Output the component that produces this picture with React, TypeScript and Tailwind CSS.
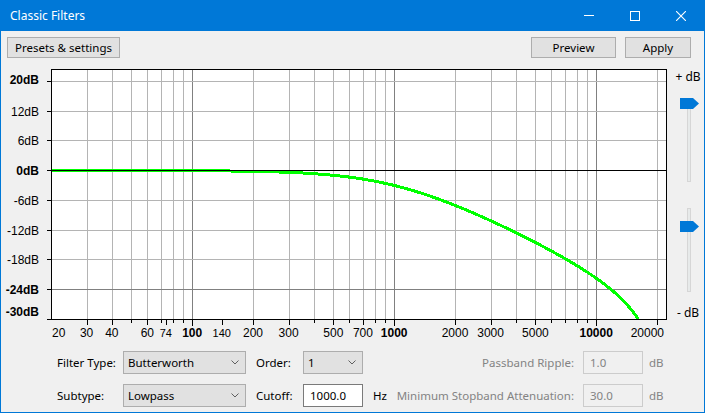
import React from 'react';

// filter response: 1st order butterworth lowpass, bilinear, 44.1k
const FS = 44100;
const FC = 1000;
const PX_PER_DECADE = 202;

const xOf = (f: number) => 51 + PX_PER_DECADE * Math.log10(f / 20);
const yOf = (db: number) => 170 - db * (149 / 30);
const col = (f: number) => Math.round(xOf(f)) + 0.5;

const gridFreqs: number[] = [];
for (const dec of [10, 100, 1000, 10000]) {
  for (let k = 1; k <= 9; k++) {
    const f = k * dec;
    if (f >= 30 && f <= 20000) gridFreqs.push(f);
  }
}
const decades = [100, 1000, 10000];

const hGrid = [
  { row: 81, color: '#b4b4b4' },
  { row: 111, color: '#b4b4b4' },
  { row: 140, color: '#b4b4b4' },
  { row: 200, color: '#b4b4b4' },
  { row: 230, color: '#b4b4b4' },
  { row: 259, color: '#b4b4b4' },
  { row: 289, color: '#808080' },
];

const dbLabels = [
  { text: '20dB', base: 83.5, tick: 81, bold: true },
  { text: '12dB', base: 116, tick: 111 },
  { text: '6dB', base: 144.5, tick: 140 },
  { text: '0dB', base: 174.5, tick: 170, bold: true },
  { text: '-6dB', base: 204.5, tick: 200 },
  { text: '-12dB', base: 234.5, tick: 230 },
  { text: '-18dB', base: 264, tick: 259 },
  { text: '-24dB', base: 294, tick: 289, bold: true },
  { text: '-30dB', base: 316, tick: 319, bold: true },
];

const hzLabels: { f: number; text: string; bold?: boolean; small?: boolean; anchor?: 'start' | 'end'; x?: number }[] = [
  { f: 20, text: '20', anchor: 'start', x: 52 },
  { f: 30, text: '30' },
  { f: 40, text: '40' },
  { f: 60, text: '60' },
  { f: 74, text: '74', small: true },
  { f: 100, text: '100', bold: true },
  { f: 140, text: '140', small: true },
  { f: 200, text: '200' },
  { f: 300, text: '300' },
  { f: 500, text: '500' },
  { f: 700, text: '700' },
  { f: 1000, text: '1000', bold: true },
  { f: 2000, text: '2000' },
  { f: 3000, text: '3000' },
  { f: 5000, text: '5000' },
  { f: 10000, text: '10000', bold: true },
  { f: 20000, text: '20000', anchor: 'end', x: 664 },
];

function curvePoints() {
  const wc = Math.tan((Math.PI * FC) / FS);
  const pts: string[] = [];
  for (let x = 52; x <= 665; x++) {
    const f = 20 * Math.pow(10, (x - 51) / PX_PER_DECADE);
    const r = Math.tan((Math.PI * f) / FS) / wc;
    const db = -10 * Math.log10(1 + r * r);
    if (db < -30) {
      pts.push(`${x},318.5`);
      break;
    }
    pts.push(`${x},${(yOf(db) + 0.5).toFixed(2)}`);
  }
  return pts.join(' ');
}

const RULER_FONT = "'Liberation Sans', Arial, sans-serif";

function Chart() {
  const pts = curvePoints();
  return (
    <svg width={671} height={283} viewBox="1 62 671 283" className="block shrink-0">
      <rect x={52} y={70} width={614} height={249} fill="#ffffff" />
      {gridFreqs.map(f => (
        <line
          key={f}
          x1={col(f)}
          x2={col(f)}
          y1={70}
          y2={319}
          stroke={decades.includes(f) ? '#808080' : '#b4b4b4'}
          strokeWidth={1}
        />
      ))}
      {hGrid.map(g => (
        <line key={g.row} x1={52} x2={666} y1={g.row + 0.5} y2={g.row + 0.5} stroke={g.color} strokeWidth={1} />
      ))}
      <polyline points={pts} fill="none" stroke="#00ff00" strokeWidth={3} shapeRendering="crispEdges" />
      <line x1={52} x2={666} y1={170.5} y2={170.5} stroke="#000000" strokeWidth={1} />
      <rect x={51.5} y={69.5} width={615} height={250} fill="none" stroke="#000000" strokeWidth={1} />

      {/* dB ruler */}
      {dbLabels.map(l => (
        <g key={l.text}>
          <line x1={47} x2={51} y1={l.tick + 0.5} y2={l.tick + 0.5} stroke="#000000" strokeWidth={1} />
          <text
            x={39}
            y={l.base}
            textAnchor="end"
            fontFamily={RULER_FONT}
            fontSize={12}
            fontWeight={l.bold ? 700 : 400}
            fill="#000000"
          >
            {l.text}
          </text>
        </g>
      ))}

      {/* Hz ruler */}
      {gridFreqs.map(f => (
        <line
          key={'t' + f}
          x1={col(f)}
          x2={col(f)}
          y1={320}
          y2={decades.includes(f) ? 326 : hzLabels.some(l => l.f === f) ? 325 : 323}
          stroke="#000000"
          strokeWidth={1}
        />
      ))}
      {[74, 140].map(f => (
        <line key={'m' + f} x1={col(f)} x2={col(f)} y1={320} y2={325} stroke="#000000" strokeWidth={1} />
      ))}
      {hzLabels.map(l => (
        <text
          key={'l' + l.text}
          x={l.x ?? xOf(l.f)}
          y={337}
          textAnchor={l.anchor ?? 'middle'}
          fontFamily={RULER_FONT}
          fontSize={l.small ? 11 : 12}
          fontWeight={l.bold ? 700 : 400}
          fill="#000000"
        >
          {l.text}
        </text>
      ))}
    </svg>
  );
}

const Thumb = ({ className }: { className: string }) => (
  <svg width={19} height={11} viewBox="0 0 19 11" className={className}>
    <polygon points="0,0 13,0 19,5.5 13,11 0,11" fill="#0078d7" />
  </svg>
);

const Chevron = () => (
  <svg width={8} height={5} viewBox="0 0 8 5" className="shrink-0">
    <polyline points="0.5,0.5 4,4 7.5,0.5" fill="none" stroke="#5f5f5f" strokeWidth={1} />
  </svg>
);

const Select = ({ value, width }: { value: string; width: string }) => (
  <div className={`${width} h-[23px] shrink-0 bg-[#e1e1e1] border border-[#adadad] flex items-center pl-[4px] pr-[6px]`}>
    <span className="flex-1">{value}</span>
    <Chevron />
  </div>
);

const Button = ({ label, width }: { label: string; width: string }) => (
  <button className={`${width} h-[21px] bg-[#e1e1e1] border border-[#adadad] flex items-center justify-center text-black leading-none`}>
    {label}
  </button>
);

export default function App() {
  return (
    <div className="w-[705px] h-[413px] border border-[#0078d7] bg-[#f0f0f0] flex flex-col overflow-hidden font-['Noto_Sans',sans-serif] text-[11.5px] text-black">
      {/* title bar */}
      <div className="h-[30px] shrink-0 bg-[#0078d7] flex items-center text-white">
        <span className="ml-[9px] text-[12px]">Classic Filters</span>
        <div className="flex-1" />
        <div className="w-[46px] h-full flex items-center justify-center">
          <svg width={10} height={10} viewBox="0 0 10 10">
            <line x1={0} x2={10} y1={4.5} y2={4.5} stroke="#ffffff" strokeWidth={1} />
          </svg>
        </div>
        <div className="w-[46px] h-full flex items-center justify-center">
          <svg width={10} height={10} viewBox="0 0 10 10">
            <rect x={0.5} y={0.5} width={9} height={9} fill="none" stroke="#ffffff" strokeWidth={1} />
          </svg>
        </div>
        <div className="w-[46px] h-full flex items-center justify-center">
          <svg width={10} height={10} viewBox="0 0 10 10">
            <path d="M0 0 L10 10 M10 0 L0 10" stroke="#ffffff" strokeWidth={1.1} />
          </svg>
        </div>
      </div>

      {/* top buttons */}
      <div className="mt-[6px] h-[21px] shrink-0 flex pl-[6px] pr-[13px]">
        <Button label="Presets & settings" width="w-[113px]" />
        <div className="flex-1" />
        <Button label="Preview" width="w-[85px]" />
        <div className="w-[9px]" />
        <Button label="Apply" width="w-[66px]" />
      </div>

      {/* graph + sliders */}
      <div className="mt-[4px] h-[283px] shrink-0 flex">
        <Chart />
        <div className="w-[32px] flex flex-col text-center text-[12px]">
          <div className="mt-[8px] h-[14px] leading-[14px]">+ dB</div>
          <div className="relative mt-[14px] h-[84px]">
            <div className="ml-[15px] w-[4px] h-full bg-[#e7eaea] border border-[#d6d6d6]" />
            <Thumb className="absolute left-[8px] top-0" />
          </div>
          <div className="relative mt-[26px] h-[84px]">
            <div className="ml-[15px] w-[4px] h-full bg-[#e7eaea] border border-[#d6d6d6]" />
            <Thumb className="absolute left-[8px] top-[13px]" />
          </div>
          <div className="mt-[14px] h-[14px] leading-[14px]">- dB</div>
        </div>
      </div>

      {/* controls row 1 */}
      <div className="mt-[6px] h-[23px] shrink-0 flex items-center pl-[56px]">
        <span className="w-[66px] shrink-0">Filter Type:</span>
        <Select value="Butterworth" width="w-[123px]" />
        <span className="ml-[10px] w-[47px] shrink-0">Order:</span>
        <Select value="1" width="w-[60px]" />
        <span className="flex-1 text-right text-[#838383]">Passband Ripple:</span>
        <div className="ml-[9px] w-[60px] h-[23px] shrink-0 border border-[#cccccc] bg-[#f0f0f0] flex items-center pl-[6px] text-[#838383]">
          1.0
        </div>
        <span className="ml-[6px] w-[55px] shrink-0 text-[#838383]">dB</span>
      </div>

      {/* controls row 2 */}
      <div className="mt-[10px] h-[23px] shrink-0 flex items-center pl-[56px]">
        <span className="w-[66px] shrink-0">Subtype:</span>
        <Select value="Lowpass" width="w-[123px]" />
        <span className="ml-[10px] w-[47px] shrink-0">Cutoff:</span>
        <div className="w-[60px] h-[23px] shrink-0 border border-[#7a7a7a] bg-white flex items-center pl-[6px]">
          1000.0
        </div>
        <span className="ml-[10px] shrink-0">Hz</span>
        <span className="flex-1 text-right text-[#838383]">Minimum Stopband Attenuation:</span>
        <div className="ml-[9px] w-[60px] h-[23px] shrink-0 border border-[#cccccc] bg-[#f0f0f0] flex items-center pl-[6px] text-[#838383]">
          30.0
        </div>
        <span className="ml-[6px] w-[55px] shrink-0 text-[#838383]">dB</span>
      </div>
    </div>
  );
}
